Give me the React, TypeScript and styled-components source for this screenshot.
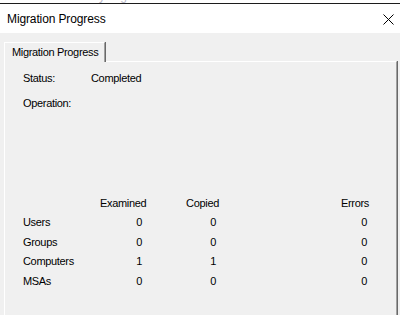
import React from 'react'
import styled, { createGlobalStyle } from 'styled-components'

const GlobalStyle = createGlobalStyle`
    html, body {
        margin: 0;
        padding: 0;
        background: #f0f0f0;
        overflow: hidden;
    }
`

interface Row {
    name: string
    examined: number
    copied: number
    errors: number
}

const rows: Row[] = [
    { name: 'Users', examined: 0, copied: 0, errors: 0 },
    { name: 'Groups', examined: 0, copied: 0, errors: 0 },
    { name: 'Computers', examined: 1, copied: 1, errors: 0 },
    { name: 'MSAs', examined: 0, copied: 0, errors: 0 },
]

const App: React.FC = () => {
    return (
        <Screen>
            <GlobalStyle />
            <ParentStrip>
                <ParentTitle>Active Directory Migration Tool</ParentTitle>
            </ParentStrip>
            <Window>
                <TitleBar>
                    <Title>Migration Progress</Title>
                    <Close aria-label="Close">
                        <svg width="11" height="11" viewBox="0 0 11 11">
                            <path d="M0.5 0.5 L10.5 10.5 M10.5 0.5 L0.5 10.5" stroke="#000" strokeWidth="1" fill="none" />
                        </svg>
                    </Close>
                </TitleBar>
                <Body>
                    <Tabs>
                        <Tab>Migration Progress</Tab>
                    </Tabs>
                    <Panel>
                        <Field>
                            <Label>Status:</Label>
                            <Value>Completed</Value>
                        </Field>
                        <Field $gap>
                            <Label>Operation:</Label>
                            <Value></Value>
                        </Field>
                        <Table>
                            <Cell />
                            <Head>Examined</Head>
                            <Head>Copied</Head>
                            <Head>Errors</Head>
                            {rows.map(r => (
                                <React.Fragment key={r.name}>
                                    <Cell>{r.name}</Cell>
                                    <Num>{r.examined}</Num>
                                    <Num>{r.copied}</Num>
                                    <Num $pad={2}>{r.errors}</Num>
                                </React.Fragment>
                            ))}
                        </Table>
                    </Panel>
                </Body>
            </Window>
        </Screen>
    )
}

const Screen = styled.div`
    width: 400px;
    height: 315px;
    overflow: hidden;
    background: #f0f0f0;
    font-family: "Liberation Sans", Arial, sans-serif;
    color: #000;
`
const ParentStrip = styled.div`
    height: 3px;
    overflow: hidden;
    background: #fff;
    padding-left: 24px;
`
const ParentTitle = styled.div`
    margin-top: -11px;
    font-size: 12px;
    line-height: 14px;
    color: #b8b8c8;
    letter-spacing: -0.2px;
`
const Window = styled.div`
    border-top: 1px solid #1c1c1c;
`
const TitleBar = styled.div`
    height: 29px;
    background: #fff;
    display: flex;
    align-items: center;
    justify-content: space-between;
    padding: 0 6px 0 7px;
`
const Title = styled.div`
    font-size: 12px;
    letter-spacing: -0.12px;
    line-height: 14px;
    margin-top: 1px;
`
const Close = styled.div`
    width: 11px;
    height: 11px;
    display: flex;
    margin-top: 1px;
`
const Body = styled.div`
    padding-top: 9px;
    font-size: 11px;
    letter-spacing: -0.33px;
`
const Tabs = styled.div`
    display: flex;
    padding-left: 4px;
    position: relative;
    z-index: 1;
`
const Tab = styled.div`
    height: 20px;
    box-sizing: border-box;
    width: 101px;
    padding: 3px 0 0 7px;
    line-height: 13px;
    white-space: nowrap;
    background: #f0f0f0;
    border-top: 1px solid #fff;
    border-left: 1px solid #fff;
    border-right: 1px solid #a0a0a0;
    box-shadow: 1px 0 0 #696969;
    margin-bottom: -1px;
`
const Panel = styled.div`
    margin: 0 3px 0 4px;
    height: 260px;
    border-top: 1px solid #fff;
    border-left: 1px solid #fff;
    border-right: 1px solid #a0a0a0;
    box-shadow: 1px 0 0 #696969;
    padding: 10px 0 0 18px;
`
const Field = styled.div<{ $gap?: boolean }>`
    display: flex;
    line-height: 13px;
    height: 13px;
    margin-top: ${p => (p.$gap ? '11.5px' : '0')};
`
const Label = styled.div`
    width: 68px;
`
const Value = styled.div``
const Table = styled.div`
    display: grid;
    grid-template-columns: 77px 45px 74px 150px;
    grid-auto-rows: 19.5px;
    line-height: 19.5px;
    margin-top: 84px;
`
const Cell = styled.div`
    white-space: nowrap;
`
const Head = styled.div`
    text-align: right;
    white-space: nowrap;
`
const Num = styled.div<{ $pad?: number }>`
    text-align: right;
    padding-right: ${p => p.$pad ?? 3}px;
`

export default App
